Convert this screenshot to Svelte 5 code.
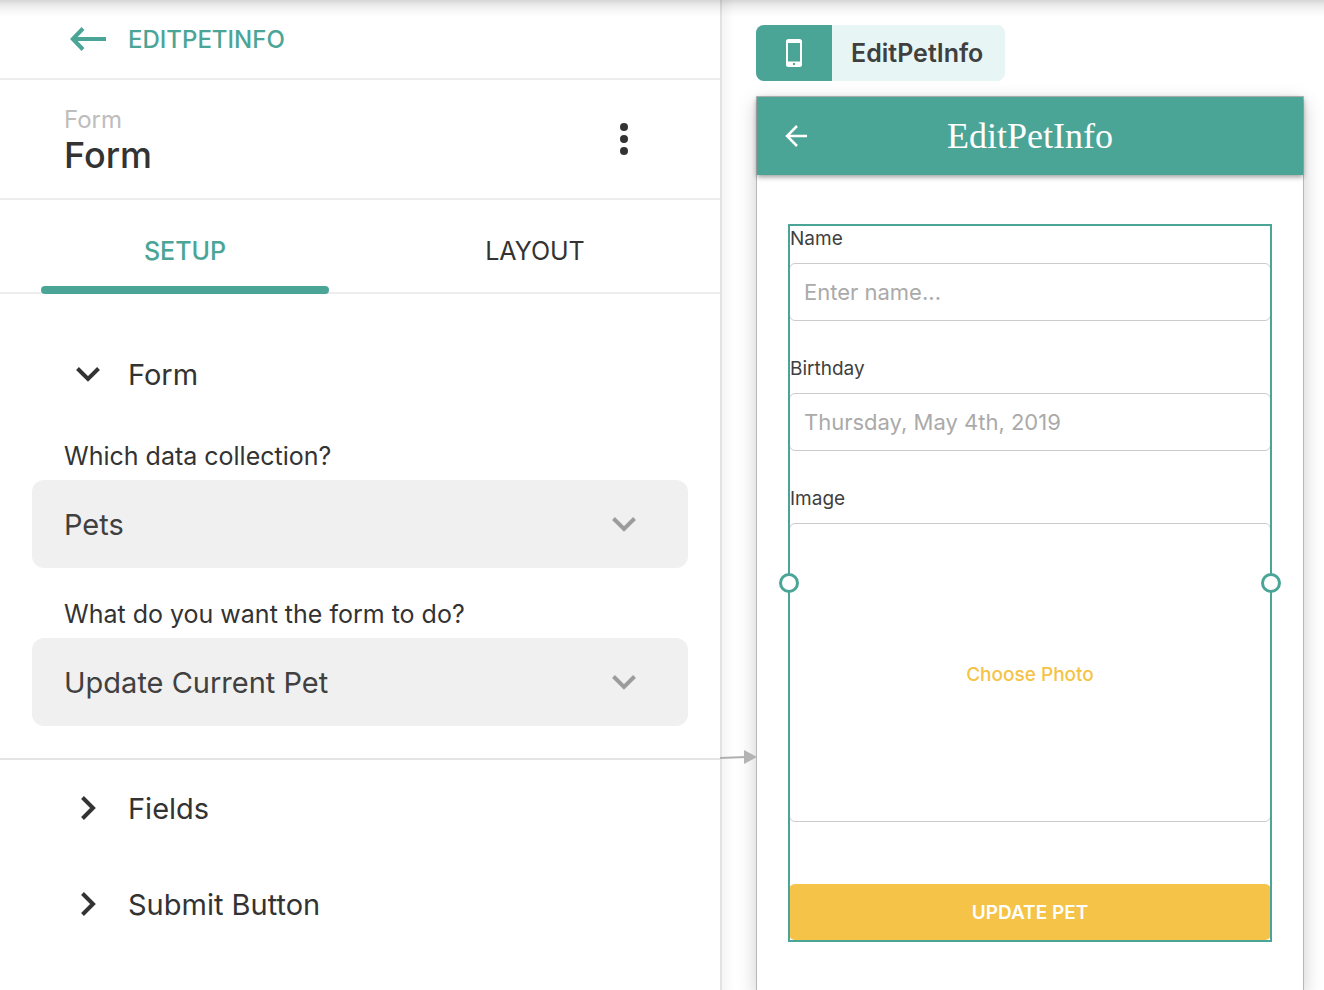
<script>
  let tab = $state('setup');
  let collection = $state('Pets');
  let action = $state('Update Current Pet');
  const closed = ['Fields', 'Submit Button'];
</script>

<div class="page">
  <section class="panel">
    <header class="crumb">
      <a href="#back">
        <svg width="36" height="24" viewBox="0 0 36 24" fill="none" stroke="currentColor" stroke-width="4" aria-hidden="true">
          <path d="M36 12H3M13 1.500L2.800 12L13 22.500" />
        </svg>
        <span>EDITPETINFO</span>
      </a>
    </header>

    <div class="title">
      <div>
        <p>Form</p>
        <h1>Form</h1>
      </div>
      <button class="more" aria-label="More options">
        <svg width="8" height="32" viewBox="0 0 8 32" fill="currentColor" aria-hidden="true">
          <circle cx="4" cy="4" r="4" /><circle cx="4" cy="16" r="4" /><circle cx="4" cy="28" r="4" />
        </svg>
      </button>
    </div>

    <nav class="tabs">
      <button class:active={tab === 'setup'} onclick={() => (tab = 'setup')}>SETUP</button>
      <button class:active={tab === 'layout'} onclick={() => (tab = 'layout')}>LAYOUT</button>
    </nav>

    <div class="group">
      <button class="fold">
        <svg width="24" height="24" viewBox="0 0 24 24" fill="none" stroke="currentColor" stroke-width="4" aria-hidden="true">
          <path d="M1.500 6.500L12 17L22.500 6.500" />
        </svg>
        <span>Form</span>
      </button>
      <div class="fields">
        <div class="field">
          <label for="collection">Which data collection?</label>
          <div class="select">
            <select id="collection" bind:value={collection}>
              <option>Pets</option>
            </select>
            <svg width="24" height="24" viewBox="0 0 24 24" fill="none" stroke="currentColor" stroke-width="4" aria-hidden="true">
              <path d="M1.500 6.500L12 17L22.500 6.500" />
            </svg>
          </div>
        </div>
        <div class="field">
          <label for="action">What do you want the form to do?</label>
          <div class="select">
            <select id="action" bind:value={action}>
              <option>Update Current Pet</option>
            </select>
            <svg width="24" height="24" viewBox="0 0 24 24" fill="none" stroke="currentColor" stroke-width="4" aria-hidden="true">
              <path d="M1.500 6.500L12 17L22.500 6.500" />
            </svg>
          </div>
        </div>
      </div>
    </div>

    {#each closed as name}
      <button class="fold">
        <svg width="24" height="24" viewBox="0 0 24 24" fill="none" stroke="currentColor" stroke-width="4" aria-hidden="true">
          <path d="M6.500 1.500L17 12L6.500 22.500" />
        </svg>
        <span>{name}</span>
      </button>
    {/each}
  </section>

  <section class="canvas">
    <svg class="link" width="37" height="16" viewBox="0 0 37 16" aria-hidden="true">
      <path d="M0 9L26 8" stroke="#b0b0b0" stroke-width="2" />
      <path d="M24 1L37 8L24 15Z" fill="#b3b3b3" />
    </svg>

    <div class="tag">
      <span class="device">
        <svg width="16" height="28" viewBox="0 0 16 28" aria-hidden="true">
          <path fill="#fff" fill-rule="evenodd" d="M2.500 0h11a2.500 2.500 0 0 1 2.500 2.500v23a2.500 2.500 0 0 1-2.500 2.500h-11a2.500 2.500 0 0 1-2.500-2.500v-23a2.500 2.500 0 0 1 2.500-2.500zM2 4v18.500h12v-18.500zM7 24v2h2v-2z" />
        </svg>
      </span>
      <span class="name">EditPetInfo</span>
    </div>

    <div class="phone">
      <header class="bar">
        <button aria-label="Back">
          <svg width="22" height="22" viewBox="0 0 22 22" fill="none" stroke="#fff" stroke-width="2.500" aria-hidden="true">
            <path d="M22 11H2M12 1L2 11L12 21" />
          </svg>
        </button>
        <h2>EditPetInfo</h2>
      </header>

      <form class="form" onsubmit={(e) => e.preventDefault()}>
        <div class="entry">
          <label for="name">Name</label>
          <input id="name" type="text" placeholder="Enter name..." />
        </div>
        <div class="entry">
          <label for="birthday">Birthday</label>
          <input id="birthday" type="text" placeholder="Thursday, May 4th, 2019" />
        </div>
        <div class="entry">
          <label for="photo">Image</label>
          <button id="photo" class="photo" type="button">Choose Photo</button>
        </div>
        <button class="submit">UPDATE PET</button>
        <div class="outline"><i></i><i></i></div>
      </form>
    </div>
  </section>
</div>

<style>
  :global(body) { margin: 0; }
  * { box-sizing: border-box; }
  .page {
    position: relative;
    display: grid;
    grid-template-columns: minmax(0, 720fr) minmax(0, 604fr);
    min-height: 100vh;
    background: #fff;
    color: #333;
    font-family: Inter, "Liberation Sans", sans-serif;
  }
  .page::after {
    content: "";
    position: absolute;
    inset: 0 0 auto;
    height: 18px;
    background: linear-gradient(rgba(0, 0, 0, 0.16), rgba(0, 0, 0, 0.08) 30%, rgba(0, 0, 0, 0.02) 70%, transparent);
    pointer-events: none;
  }
  p, h1, h2 { margin: 0; }
  svg { display: block; flex: none; }
  button {
    margin: 0;
    padding: 0;
    border: 0;
    background: none;
    color: inherit;
    font: inherit;
    cursor: pointer;
  }

  .crumb { height: 80px; border-bottom: 2px solid #ededed; }
  .crumb a {
    display: flex;
    align-items: center;
    gap: 22px;
    height: 78px;
    padding-left: 70px;
    color: #4ba597;
    font-size: 24px;
    font-weight: 500;
    text-decoration: none;
  }
  .title {
    display: flex;
    align-items: center;
    justify-content: space-between;
    height: 120px;
    padding: 0 92px 0 64px;
    border-bottom: 2px solid #ededed;
  }
  .title p { color: #bdbdbd; font-size: 24px; line-height: 32px; }
  .title h1 { font-size: 36px; font-weight: 500; line-height: 38px; }
  .more { display: flex; }

  .tabs {
    display: grid;
    grid-template-columns: 1fr 1fr;
    height: 94px;
    padding: 0 10px;
    box-shadow: inset 0 -2px #ededed;
  }
  .tabs button { position: relative; padding-top: 8px; font-size: 25px; }
  .tabs .active { color: #4ba597; font-weight: 500; }
  .tabs .active::after {
    content: "";
    position: absolute;
    inset: auto 31px 0;
    height: 8px;
    border-radius: 4px;
    background: #4ba597;
  }

  .group { padding: 32px 0; border-bottom: 2px solid #e4e4e4; }
  .fold {
    display: flex;
    align-items: center;
    gap: 28px;
    width: 100%;
    height: 96px;
    padding-left: 76px;
    font-size: 29px;
    text-align: left;
  }
  .fields { display: grid; gap: 22px; padding: 10px 32px 0; }
  .field label { display: block; padding-left: 32px; font-size: 25px; line-height: 48px; }
  .select { position: relative; color: #404040; }
  .select select {
    display: block;
    width: 100%;
    height: 88px;
    padding: 0 88px 0 32px;
    border: 0;
    border-radius: 12px;
    background: #f0f0f0;
    color: inherit;
    font: inherit;
    font-size: 29px;
    appearance: none;
  }
  .select svg {
    position: absolute;
    top: 32px;
    right: 52px;
    color: #9c9c9c;
    pointer-events: none;
  }

  .canvas {
    position: relative;
    display: flex;
    flex-direction: column;
    align-items: flex-start;
    gap: 15px;
    padding: 25px 20px 0 36px;
    overflow: hidden;
    background: linear-gradient(90deg, #e2e2e2 2px, #f5f5f5 2px, #fff 14px);
  }
  .link { position: absolute; top: 749px; left: 0; z-index: 1; }
  .tag {
    display: flex;
    height: 56px;
    border-radius: 8px;
    overflow: hidden;
    background: #e7f5f4;
    color: #404040;
    font-size: 25px;
    font-weight: 600;
    line-height: 56px;
  }
  .device { display: grid; place-items: center; width: 76px; background: #4ba597; }
  .name { padding: 0 22px 0 19px; }

  .phone {
    flex: 1;
    align-self: stretch;
    border: 1px solid #b8b8b8;
    border-bottom: 0;
    background: #fff;
    box-shadow: 0 6px 18px rgba(0, 0, 0, 0.2);
  }
  .bar {
    display: grid;
    grid-template-columns: 78px 1fr 78px;
    align-items: center;
    height: 78px;
    background: #4ba597;
    box-shadow: 0 2px 5px rgba(0, 0, 0, 0.4);
    color: #fff;
  }
  .bar button { display: grid; place-items: center; }
  .bar h2 {
    font: 400 36px/40px "Liberation Serif", serif;
    text-align: center;
  }
  .form {
    position: relative;
    margin: 50px 32px 48px;
    padding-bottom: 1px;
    color: #404040;
    font-size: 19px;
  }
  .entry { margin-bottom: 34px; }
  .entry label { display: block; margin-bottom: 11px; padding-left: 1px; line-height: 27px; }
  .entry input,
  .photo {
    display: block;
    width: 100%;
    height: 58px;
    padding: 0 14px;
    border: 1px solid #ccc;
    border-radius: 6px;
    background: #fff;
    font: inherit;
    font-size: 22px;
  }
  .entry input::placeholder { color: #aaa; opacity: 1; }
  .entry .photo { height: 299px; margin-bottom: 62px; padding-top: 4px; color: #f5c347; font-size: 19px; font-weight: 500; }
  .submit {
    display: block;
    width: 100%;
    height: 56px;
    border-radius: 6px;
    background: #f5c347;
    color: #fff;
    font-weight: 600;
  }
  .outline {
    position: absolute;
    inset: -1px;
    border: 2px solid #4ba597;
    pointer-events: none;
  }
  .outline i {
    position: absolute;
    top: calc(50% - 10px);
    left: -11px;
    width: 20px;
    height: 20px;
    border: 3px solid #4ba597;
    border-radius: 50%;
    background: #fff;
  }
  .outline i + i { right: -11px; left: auto; }
</style>
